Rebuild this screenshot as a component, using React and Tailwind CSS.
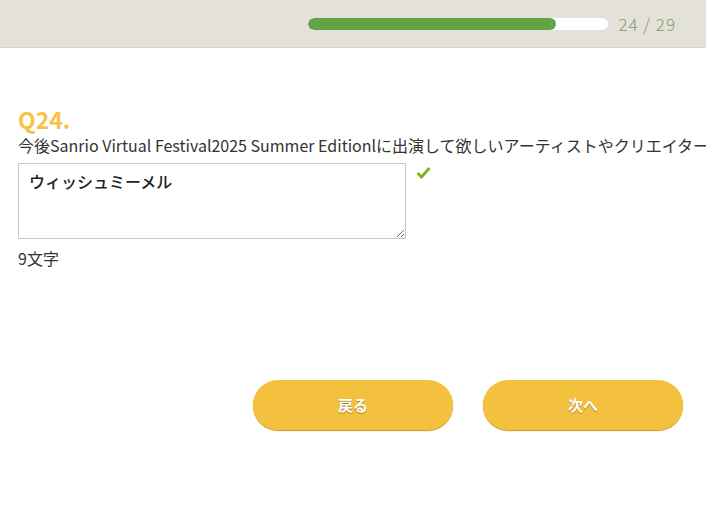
import React from "react";

const font = { fontFamily: '"Noto Sans CJK JP", "Noto Sans", sans-serif' };

export default function App() {
  return (
    <div className="w-[706px] h-[505px] bg-white overflow-hidden text-[#333]" style={font}>
      <div className="h-[48px] bg-[#e4e1db] border-b border-[#d6d3cc] flex items-center justify-end pr-[30px] gap-[10px]">
        <div className="w-[300px] h-[12px] bg-white rounded-full overflow-hidden">
          <div className="h-full bg-[#62a346] rounded-full" style={{ width: `${(248 / 300) * 100}%` }} />
        </div>
        <span className="text-[17px] font-light text-[#7f9c66] tracking-[1px]">24 / 29</span>
      </div>

      <div className="pl-[18px] pt-[57px]">
        <div className="text-[23px] leading-[28px] font-bold text-[#f6c24a]">Q24.</div>
        <p className="text-[16px] leading-[24px] whitespace-nowrap">
          今後Sanrio Virtual Festival2025 Summer Editionlに出演して欲しいアーティストやクリエイターを教えてください。
        </p>
        <div className="flex items-start gap-[10px] mt-[6px]">
          <textarea
            className="w-[388px] h-[76px] border border-[#c8c8c8] px-[10px] py-[5px] text-[16px] font-medium text-[#222] outline-none"
            style={font}
            defaultValue="ウィッシュミーメル"
          />
          <svg width="15" height="13" viewBox="0 0 15 13" className="mt-[3px]">
            <path d="M1.5 7 L5.5 11 L13.5 2" fill="none" stroke="#7ab51d" strokeWidth="2.8" />
          </svg>
        </div>
        <div className="text-[16px] mt-[7px]">9文字</div>
      </div>

      <div className="flex justify-end gap-[30px] pr-[23px] mt-[110px]">
        <button className="w-[200px] h-[50px] rounded-full bg-[#f4c13e] shadow-[0_1px_1px_#c9981f] text-white font-bold text-[15px] [text-shadow:0_1px_1px_rgba(0,0,0,0.35)]">
          戻る
        </button>
        <button className="w-[200px] h-[50px] rounded-full bg-[#f4c13e] shadow-[0_1px_1px_#c9981f] text-white font-bold text-[15px] [text-shadow:0_1px_1px_rgba(0,0,0,0.35)]">
          次へ
        </button>
      </div>
    </div>
  );
}
